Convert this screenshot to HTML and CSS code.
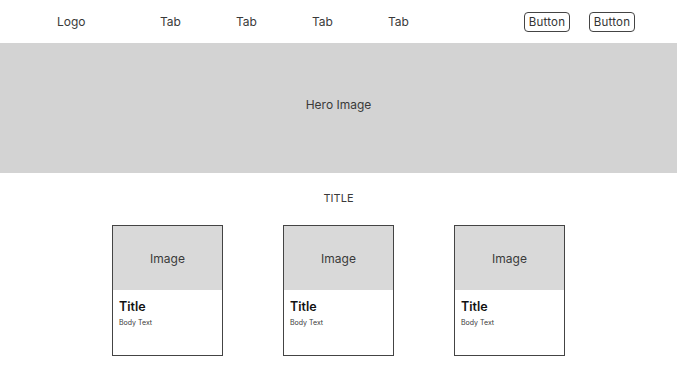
FILE: index.html
```html
<!DOCTYPE html>
<html lang="en">
<head>
  <meta charset="UTF-8" />
  <title>Wireframe</title>
  <link rel="stylesheet" href="styles.css">
</head>
<body>
  <div class="nav">
    <div class="logo">Logo</div>
    <div class="tabs">
      <span class="tab">Tab</span>
      <span class="tab">Tab</span>
      <span class="tab">Tab</span>
      <span class="tab">Tab</span>
    </div>
    <div class="actions">
      <button class="btn">Button</button>
      <button class="btn">Button</button>
    </div>
  </div>

  <div class="hero">Hero Image</div>

  <h2 class="title">TITLE</h2>

  <div class="cards">
    <div class="card">
      <div class="card-image">Image</div>
      <div class="card-body">
        <h3>Title</h3>
        <p>Body Text</p>
      </div>
    </div>
    <div class="card">
      <div class="card-image">Image</div>
      <div class="card-body">
        <h3>Title</h3>
        <p>Body Text</p>
      </div>
    </div>
    <div class="card">
      <div class="card-image">Image</div>
      <div class="card-body">
        <h3>Title</h3>
        <p>Body Text</p>
      </div>
    </div>
  </div>
</body>
</html>
```

FILE: styles.css
```css
body {
  margin: 0;
  font-family: Inter, "Liberation Sans", sans-serif;
  color: #3a3a3a;
  background: #fff;
}

.nav {
  height: 43px;
  display: flex;
  align-items: center;
  padding: 0 42px 0 57px;
  font-size: 12px;
}

.logo {
  width: 103px;
}

.tabs {
  display: flex;
  gap: 56px;
  flex: 1;
}

.tab {
  width: 20px;
}

.actions {
  display: flex;
  gap: 19px;
}

.btn {
  height: 20px;
  width: 46px;
  padding: 0;
  font-family: inherit;
  font-size: 11.5px;
  letter-spacing: 0.2px;
  color: #333;
  background: #fff;
  border: 1px solid #444;
  border-radius: 4px;
}

.hero {
  height: 130px;
  background: #d3d3d3;
  display: flex;
  align-items: center;
  justify-content: center;
  padding-bottom: 8px;
  box-sizing: border-box;
  font-size: 12px;
}

.title {
  margin: 18px 0 0;
  height: 34px;
  text-align: center;
  font-size: 11px;
  font-weight: normal;
}

.cards {
  display: flex;
  justify-content: center;
  gap: 60px;
}

.card {
  width: 111px;
  height: 131px;
  border: 1px solid #444;
  box-sizing: border-box;
}

.card-image {
  height: 64px;
  background: #d9d9d9;
  display: flex;
  align-items: center;
  justify-content: center;
  font-size: 12px;
}

.card-body {
  padding: 9px 6px;
}

.card-body h3 {
  margin: 0;
  font-size: 12.5px;
  font-weight: 600;
  color: #111;
}

.card-body p {
  margin: 4px 0 0;
  font-size: 7px;
}
```
